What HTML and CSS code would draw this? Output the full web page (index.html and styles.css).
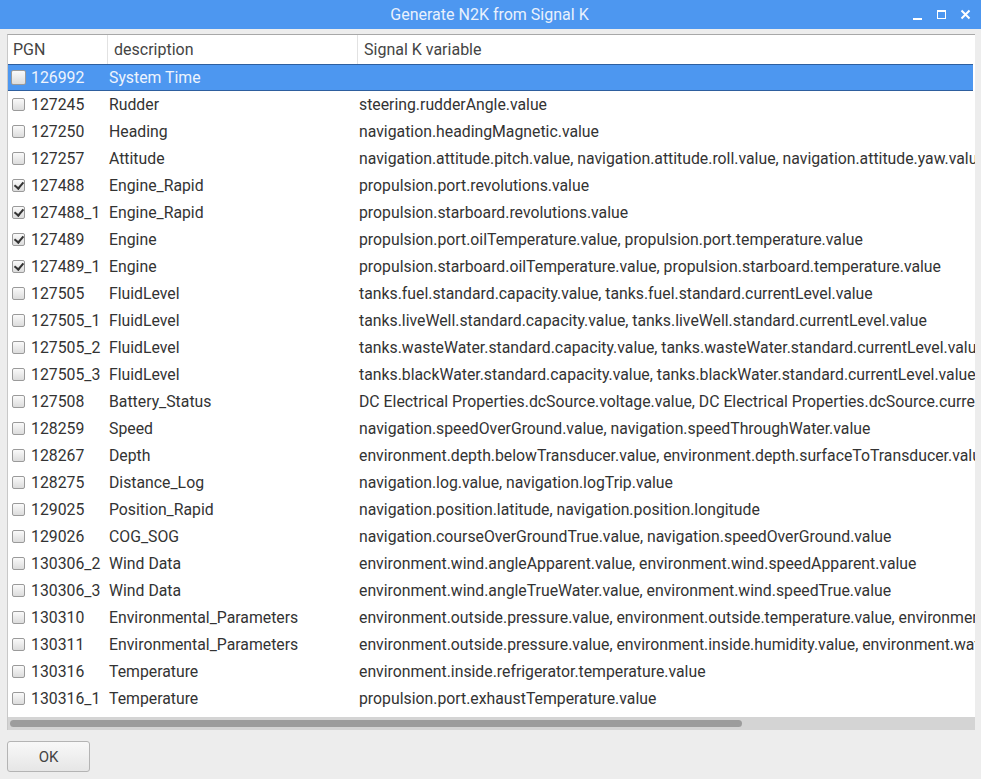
FILE: index.html
```html
<!DOCTYPE html>
<html>
<head>
<meta charset="utf-8">
<link rel="stylesheet" href="styles.css">
</head>
<body>
<div class="window">
  <div class="titlebar">
    <div class="title">Generate N2K from Signal K</div>
    <div class="controls">
      <svg class="ctl" width="12" height="12" viewBox="0 0 12 12"><rect x="1" y="9" width="9" height="2" fill="#fff"/></svg>
      <svg class="ctl" width="12" height="12" viewBox="0 0 12 12"><rect x="1.5" y="1.5" width="8" height="8" fill="none" stroke="#fff" stroke-width="1"/><rect x="1" y="1" width="9" height="2" fill="#fff"/></svg>
      <svg class="ctl" width="12" height="12" viewBox="0 0 12 12"><path d="M1.5 1.5 L9.5 9.5 M9.5 1.5 L1.5 9.5" stroke="#fff" stroke-width="2"/></svg>
    </div>
  </div>
  <div class="content">
    <div class="table">
      <div class="header">
        <div class="hcell c1">PGN</div>
        <div class="hcell c2">description</div>
        <div class="hcell c3">Signal K variable</div>
      </div>
      <div class="rows" id="rows">
        <div class="row selected"><div class="cell c1"><span class="cb"></span>126992</div><div class="cell c2">System Time</div><div class="cell c3"></div></div>
        <div class="row"><div class="cell c1"><span class="cb"></span>127245</div><div class="cell c2">Rudder</div><div class="cell c3">steering.rudderAngle.value</div></div>
        <div class="row"><div class="cell c1"><span class="cb"></span>127250</div><div class="cell c2">Heading</div><div class="cell c3">navigation.headingMagnetic.value</div></div>
        <div class="row"><div class="cell c1"><span class="cb"></span>127257</div><div class="cell c2">Attitude</div><div class="cell c3">navigation.attitude.pitch.value, navigation.attitude.roll.value, navigation.attitude.yaw.value</div></div>
        <div class="row"><div class="cell c1"><span class="cb checked"></span>127488</div><div class="cell c2">Engine_Rapid</div><div class="cell c3">propulsion.port.revolutions.value</div></div>
        <div class="row"><div class="cell c1"><span class="cb checked"></span>127488_1</div><div class="cell c2">Engine_Rapid</div><div class="cell c3">propulsion.starboard.revolutions.value</div></div>
        <div class="row"><div class="cell c1"><span class="cb checked"></span>127489</div><div class="cell c2">Engine</div><div class="cell c3">propulsion.port.oilTemperature.value, propulsion.port.temperature.value</div></div>
        <div class="row"><div class="cell c1"><span class="cb checked"></span>127489_1</div><div class="cell c2">Engine</div><div class="cell c3">propulsion.starboard.oilTemperature.value, propulsion.starboard.temperature.value</div></div>
        <div class="row"><div class="cell c1"><span class="cb"></span>127505</div><div class="cell c2">FluidLevel</div><div class="cell c3">tanks.fuel.standard.capacity.value, tanks.fuel.standard.currentLevel.value</div></div>
        <div class="row"><div class="cell c1"><span class="cb"></span>127505_1</div><div class="cell c2">FluidLevel</div><div class="cell c3">tanks.liveWell.standard.capacity.value, tanks.liveWell.standard.currentLevel.value</div></div>
        <div class="row"><div class="cell c1"><span class="cb"></span>127505_2</div><div class="cell c2">FluidLevel</div><div class="cell c3">tanks.wasteWater.standard.capacity.value, tanks.wasteWater.standard.currentLevel.value</div></div>
        <div class="row"><div class="cell c1"><span class="cb"></span>127505_3</div><div class="cell c2">FluidLevel</div><div class="cell c3">tanks.blackWater.standard.capacity.value, tanks.blackWater.standard.currentLevel.value</div></div>
        <div class="row"><div class="cell c1"><span class="cb"></span>127508</div><div class="cell c2">Battery_Status</div><div class="cell c3">DC Electrical Properties.dcSource.voltage.value, DC Electrical Properties.dcSource.current.value</div></div>
        <div class="row"><div class="cell c1"><span class="cb"></span>128259</div><div class="cell c2">Speed</div><div class="cell c3">navigation.speedOverGround.value, navigation.speedThroughWater.value</div></div>
        <div class="row"><div class="cell c1"><span class="cb"></span>128267</div><div class="cell c2">Depth</div><div class="cell c3">environment.depth.belowTransducer.value, environment.depth.surfaceToTransducer.value</div></div>
        <div class="row"><div class="cell c1"><span class="cb"></span>128275</div><div class="cell c2">Distance_Log</div><div class="cell c3">navigation.log.value, navigation.logTrip.value</div></div>
        <div class="row"><div class="cell c1"><span class="cb"></span>129025</div><div class="cell c2">Position_Rapid</div><div class="cell c3">navigation.position.latitude, navigation.position.longitude</div></div>
        <div class="row"><div class="cell c1"><span class="cb"></span>129026</div><div class="cell c2">COG_SOG</div><div class="cell c3">navigation.courseOverGroundTrue.value, navigation.speedOverGround.value</div></div>
        <div class="row"><div class="cell c1"><span class="cb"></span>130306_2</div><div class="cell c2">Wind Data</div><div class="cell c3">environment.wind.angleApparent.value, environment.wind.speedApparent.value</div></div>
        <div class="row"><div class="cell c1"><span class="cb"></span>130306_3</div><div class="cell c2">Wind Data</div><div class="cell c3">environment.wind.angleTrueWater.value, environment.wind.speedTrue.value</div></div>
        <div class="row"><div class="cell c1"><span class="cb"></span>130310</div><div class="cell c2">Environmental_Parameters</div><div class="cell c3">environment.outside.pressure.value, environment.outside.temperature.value, environment.water.temperature.value</div></div>
        <div class="row"><div class="cell c1"><span class="cb"></span>130311</div><div class="cell c2">Environmental_Parameters</div><div class="cell c3">environment.outside.pressure.value, environment.inside.humidity.value, environment.water.temperature.value</div></div>
        <div class="row"><div class="cell c1"><span class="cb"></span>130316</div><div class="cell c2">Temperature</div><div class="cell c3">environment.inside.refrigerator.temperature.value</div></div>
        <div class="row"><div class="cell c1"><span class="cb"></span>130316_1</div><div class="cell c2">Temperature</div><div class="cell c3">propulsion.port.exhaustTemperature.value</div></div>
      </div>
      <div class="hscroll"><div class="thumb"></div></div>
    </div>
    <div class="footer">
      <button class="ok">OK</button>
    </div>
  </div>
</div>
</body>
</html>
```
FILE: styles.css
```css
* { box-sizing: border-box; }
html, body { margin: 0; padding: 0; }
body {
  width: 981px;
  height: 779px;
  overflow: hidden;
  background: #ededed;
  font-family: Roboto, "Liberation Sans", sans-serif;
  color: #333;
}
.window { width: 981px; height: 779px; display: flex; flex-direction: column; }
.titlebar {
  height: 29px;
  background: #4d97f0;
  position: relative;
  display: flex;
  align-items: center;
  justify-content: center;
}
.title { color: #e9f1fd; font-size: 16px; margin-left: -2px; }
.controls {
  position: absolute;
  right: 9px;
  top: 9px;
  display: flex;
  gap: 12px;
}
.ctl { display: block; }
.content { flex: 1; padding: 5px 6px 0 7px; display: flex; flex-direction: column; }
.table {
  width: 968px;
  height: 696px;
  background: #fff;
  border-top: 1px solid #a8a8a8;
  border-left: 1px solid #c8c8c8;
  display: flex;
  flex-direction: column;
  overflow: hidden;
}
.header { display: flex; height: 29px; flex: none; }
.hcell {
  font-size: 16px;
  color: #444;
  padding: 5px 0 0 5px;
  white-space: nowrap;
}
.hcell.c2, .hcell.c3 { border-left: 1px solid #e2e2e2; padding-left: 6px; }
.c1 { width: 99px; flex: none; }
.c2 { width: 250px; flex: none; }
.c3 { flex: 1; min-width: 0; }
.rows { flex: 1; overflow: hidden; }
.row { display: flex; height: 27px; align-items: center; white-space: nowrap; font-size: 15.8px; }
.cell { white-space: nowrap; }
.cell.c1 { display: flex; align-items: center; padding-left: 4px; }
.cell.c2 { padding-left: 2px; }
.cell.c3 { padding-left: 2px; overflow: hidden; }
.row.selected {
  background: #4d97f0;
  color: #eef4fd;
  border-top: 1px solid #2e5f9e;
  border-bottom: 1px solid #2e5f9e;
  margin-right: 2px;
}
.row.selected .cell.c1 { padding-left: 3px; }
.cb {
  width: 13px;
  height: 13px;
  border: 1px solid #9a9a9a;
  border-radius: 2px;
  background: linear-gradient(#fafafa, #dcdcdc);
  margin-right: 6px;
  flex: none;
  position: relative;
}
.selected .cb { width: 15px; height: 15px; margin-right: 5px; }
.cb.checked::after {
  content: "";
  position: absolute;
  left: 3px;
  top: 0px;
  width: 4px;
  height: 7px;
  border-right: 2px solid #333;
  border-bottom: 2px solid #333;
  transform: rotate(40deg);
}
.hscroll {
  height: 13px;
  flex: none;
  background: #d4d4d4;
  display: flex;
  align-items: center;
  padding-left: 2px;
}
.thumb {
  width: 732px;
  height: 7px;
  background: #9c9c9c;
  border-radius: 4px;
}
.footer { padding-top: 11px; }
.ok {
  width: 83px;
  height: 31px;
  border: 1px solid #b4b4b4;
  border-radius: 3px;
  background: linear-gradient(#f8f8f8, #e6e6e6);
  font-family: Roboto, "Liberation Sans", sans-serif;
  font-size: 15px;
  color: #444;
  padding: 0;
}
```
